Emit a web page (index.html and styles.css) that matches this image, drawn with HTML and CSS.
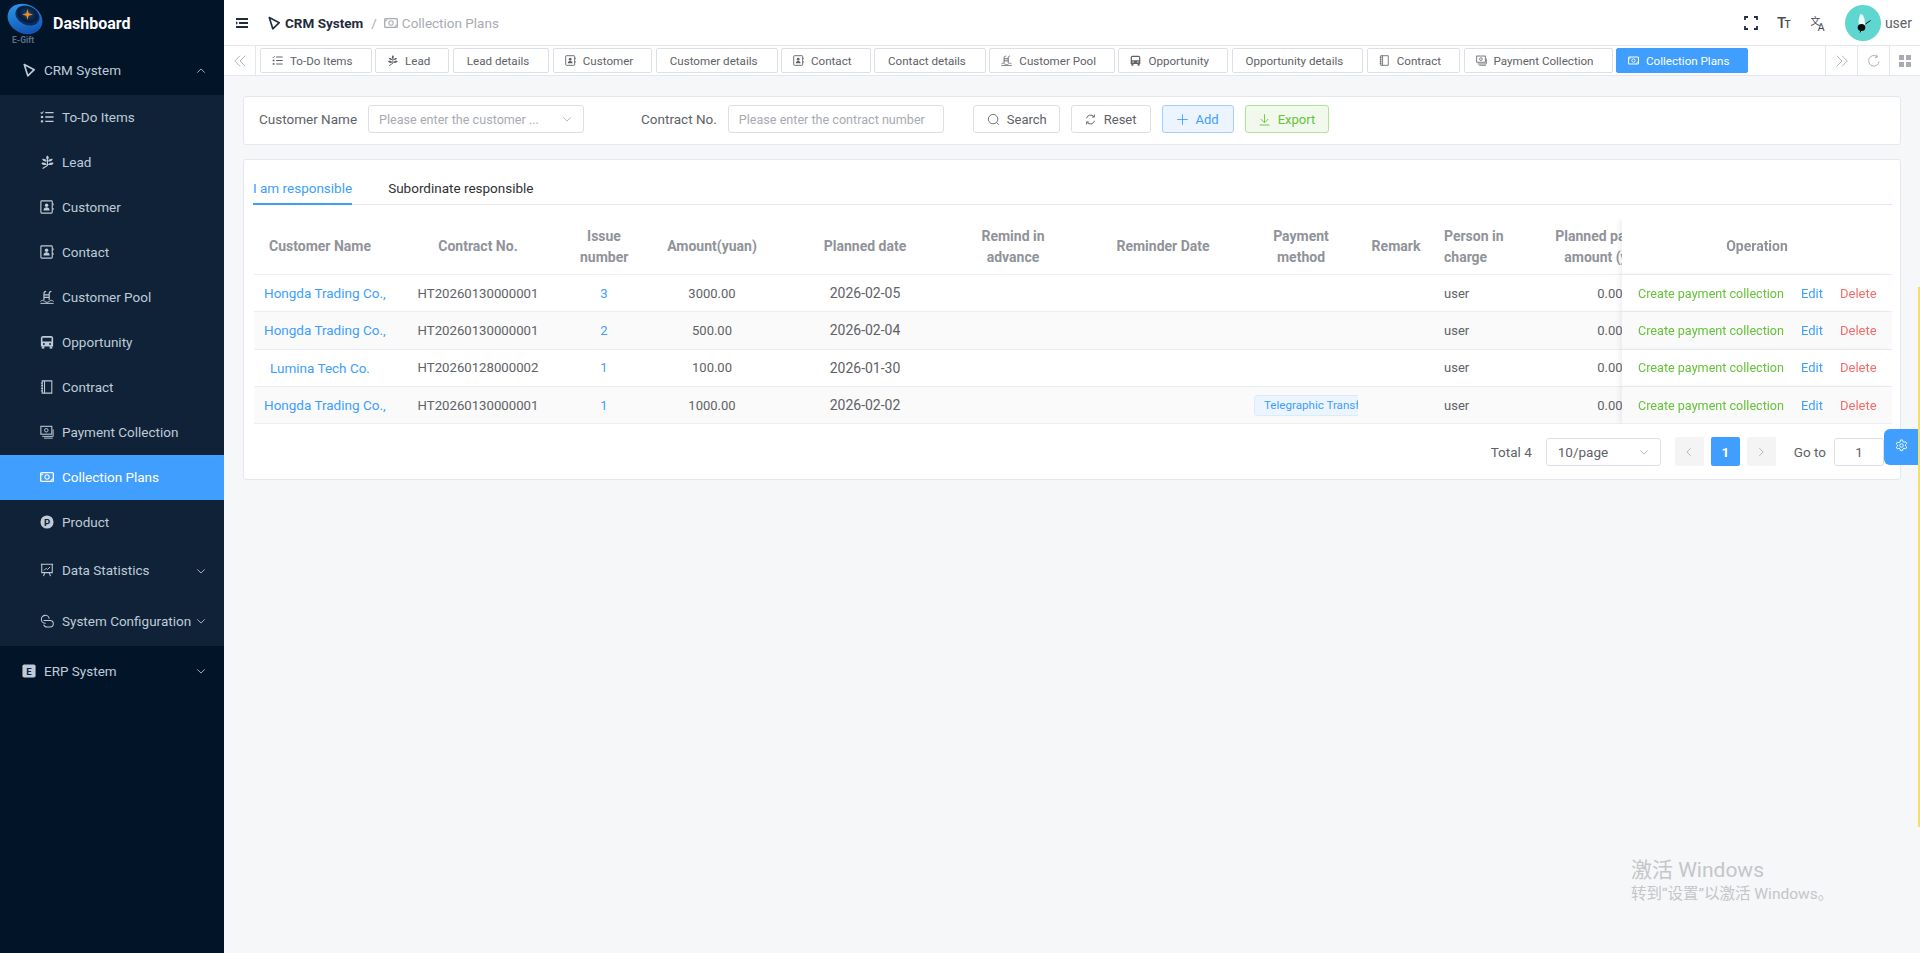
FILE: index.html
```html
<!DOCTYPE html>
<html lang="en">
<head>
    <meta charset="UTF-8">
    <meta name="viewport" content="width=device-width, initial-scale=1.0">
    <title>Collection Plans - CRM System</title>
    <link rel="stylesheet" href="styles.css">
</head>
<body>
    <svg class="icon-defs" xmlns="http://www.w3.org/2000/svg">
        <symbol id="i-brand" viewBox="0 0 16 16"><path d="M2.600 1.800 14 7.600 6.600 14.600 Z" fill="none" stroke="currentColor" stroke-width="1.900" stroke-linejoin="round"/></symbol>
        <symbol id="i-todo" viewBox="0 0 16 16"><path d="M6 3h9.500M6 8h9.500M6 13h9.500" stroke="currentColor" stroke-width="1.500" fill="none"/><path d="M.8 2.800l1.200 1.200 2-2.300" stroke="currentColor" stroke-width="1.200" fill="none"/><rect x="1" y="6.800" width="2.600" height="2.400" fill="currentColor"/><rect x="1" y="11.800" width="2.600" height="2.400" fill="currentColor"/></symbol>
        <symbol id="i-lead" viewBox="0 0 16 16"><path d="M8.500 5v7L3 15.500" fill="none" stroke="currentColor" stroke-width="1.300"/><path d="M8.500 .5C10.500 2 10.500 4 8.500 6 6.500 4 6.500 2 8.500 .5zM8 7C6.500 4.500 4.500 4 2.500 4.500 3 7 5.500 8 8 7zM9 7c1.500-2.500 3.500-3 5.500-2.500C14 7 11.500 8 9 7zM8 11C6.500 8.500 3.500 8 1.500 9 2.500 11.500 5.500 12 8 11zM9 11c1.500-2.500 4.500-3 6.500-2-1 2.500-4 3-6.500 2z" fill="currentColor"/></symbol>
        <symbol id="i-customer" viewBox="0 0 16 16"><rect x="1" y="1" width="13" height="14" rx="1" fill="none" stroke="currentColor" stroke-width="1.300"/><circle cx="7.500" cy="6" r="2" fill="currentColor"/><path d="M4 12c0-5 7-5 7 0z" fill="currentColor"/><path d="M15 4v2M15 9v2" stroke="currentColor" stroke-width="1.200"/></symbol>
        <symbol id="i-pool" viewBox="0 0 16 16"><path d="M4.500 11.500V4C4.500 2.500 5.500 1.500 7 1.500M10.500 11.500V4C10.500 2.500 11.500 1.500 13 1.500M4.500 5.500h6M4.500 8.500h6" stroke="currentColor" stroke-width="1.300" fill="none"/><path d="M.5 13c2-1.500 3-1.500 5 0s3 1.500 5 0 3-1.500 5 0M.5 15.300h15" stroke="currentColor" stroke-width="1.100" fill="none"/></symbol>
        <symbol id="i-bus" viewBox="0 0 16 16"><path fill-rule="evenodd" d="M3.500 1h9A2.500 2.500 0 0 1 15 3.500V13H1V3.500A2.500 2.500 0 0 1 3.500 1zM2.800 3v4.500h10.400V3zM4.500 9.100a1.100 1.100 0 1 0 0 2.200 1.100 1.100 0 0 0 0-2.200zM11.500 9.100a1.100 1.100 0 1 0 0 2.200 1.100 1.100 0 0 0 0-2.200z" fill="currentColor"/><rect x="2" y="13" width="3" height="2.500" fill="currentColor"/><rect x="11" y="13" width="3" height="2.500" fill="currentColor"/></symbol>
        <symbol id="i-contract" viewBox="0 0 16 16"><path d="M2.500 1h11v14h-11zM5.200 1v14" fill="none" stroke="currentColor" stroke-width="1.200"/><path d="M1 3.500h2.500M1 6.500h2.500M1 9.500h2.500M1 12.500h2.500" stroke="currentColor" stroke-width="1.100"/></symbol>
        <symbol id="i-payment" viewBox="0 0 16 16"><rect x="1" y="1.500" width="12.500" height="9" fill="none" stroke="currentColor" stroke-width="1.200"/><circle cx="7.200" cy="6" r="2" fill="none" stroke="currentColor" stroke-width="1.100"/><path d="M2.500 13h12.500v-8M4.500 15h10" fill="none" stroke="currentColor" stroke-width="1.100"/></symbol>
        <symbol id="i-money" viewBox="0 0 16 16"><rect x=".8" y="3" width="14.400" height="10" rx="1" fill="none" stroke="currentColor" stroke-width="1.500"/><circle cx="8" cy="8" r="2.500" fill="none" stroke="currentColor" stroke-width="1.200"/><path d="M.8 5.500h2l1-2.500M15.200 10.500h-2l-1 2.500" fill="none" stroke="currentColor" stroke-width="1"/></symbol>
        <symbol id="i-stats" viewBox="0 0 16 16"><path d="M1 1.500h14M2 1.500v9.500h12V1.500M5.500 11l-1.500 4M10.500 11l1.500 4" fill="none" stroke="currentColor" stroke-width="1.200"/><path d="M4.500 8.500l2.500-2.500 1.500 1.500 3-3" fill="none" stroke="currentColor" stroke-width="1.100"/></symbol>
        <symbol id="i-config" viewBox="0 0 16 16"><path d="M6.500 10.500A4.500 4.500 0 1 1 10.500 5.500" fill="none" stroke="currentColor" stroke-width="1.200"/><path d="M4 7.500h7.500a3.700 3.700 0 0 1 0 7.400H8a4 4 0 0 1-3.800-2.800" fill="none" stroke="currentColor" stroke-width="1.200"/></symbol>
        <symbol id="i-chevron" viewBox="0 0 12 12"><path d="M1.500 4 6 8.500 10.500 4" fill="none" stroke="currentColor" stroke-width="1"/></symbol>
        <symbol id="i-search" viewBox="0 0 16 16"><circle cx="7.500" cy="7.500" r="5.800" fill="none" stroke="currentColor" stroke-width="1.100"/><path d="M11.700 11.700 14.500 14.500" stroke="currentColor" stroke-width="1.100"/></symbol>
        <symbol id="i-refresh" viewBox="0 0 16 16"><path d="M3 6.500A5.300 5.300 0 0 1 12.200 4.500M13 9.500A5.300 5.300 0 0 1 3.800 11.500" fill="none" stroke="currentColor" stroke-width="1.200"/><path d="M12.800 1.800v3.200H9.700M3.200 14.200V11h3.100" fill="none" stroke="currentColor" stroke-width="1.100"/></symbol>
        <symbol id="i-reload" viewBox="0 0 16 16"><path d="M13.800 8.500A6 6 0 1 1 11.500 3" fill="none" stroke="currentColor" stroke-width="1.100"/><path d="M11 .8l.8 2.700-2.700.8" fill="none" stroke="currentColor" stroke-width="1.100"/></symbol>
        <symbol id="i-plus" viewBox="0 0 16 16"><path d="M8 1.500v13M1.500 8h13" stroke="currentColor" stroke-width="1.100"/></symbol>
        <symbol id="i-download" viewBox="0 0 16 16"><path d="M8 1.500v10M3.500 7.500 8 12l4.500-4.500M2 14.800h12" fill="none" stroke="currentColor" stroke-width="1.100"/></symbol>
        <symbol id="i-gear" viewBox="0 0 16 16"><path d="M6.700 1.200h2.600l.4 2 1.500.8 1.900-.7 1.300 2.300-1.500 1.300v1.700l1.500 1.300-1.300 2.300-1.900-.7-1.500.8-.4 2H6.700l-.4-2-1.500-.8-1.900.7-1.300-2.300 1.500-1.300V7.400L1.600 6.100l1.300-2.300 1.900.7 1.500-.8z" fill="none" stroke="currentColor" stroke-width="1.100" stroke-linejoin="round"/><circle cx="8" cy="8" r="2.200" fill="none" stroke="currentColor" stroke-width="1.100"/></symbol>
        <symbol id="i-double" viewBox="0 0 16 16"><path d="M8 2 2 8l6 6M14 2 8 8l6 6" fill="none" stroke="currentColor" stroke-width="1"/></symbol>
        <symbol id="i-full" viewBox="0 0 14 14"><path d="M1 4V1h3M10 1h3v3M13 10v3h-3M4 13H1v-3" fill="none" stroke="currentColor" stroke-width="1.800"/></symbol>
    </svg>

    <div class="layout">
        <aside class="sidebar">
            <div class="logo">
                <svg class="logo-mark" viewBox="0 0 38 41">
                    <defs>
                        <linearGradient id="logo-blue" x1="0" y1="0" x2="1" y2="1">
                            <stop offset="0" stop-color="#2f9ff0"/>
                            <stop offset="1" stop-color="#0c46a6"/>
                        </linearGradient>
                        <radialGradient id="logo-core" cx="50%" cy="45%" r="55%">
                            <stop offset="0" stop-color="#16457a"/>
                            <stop offset="1" stop-color="#04152c"/>
                        </radialGradient>
                    </defs>
                    <ellipse cx="19" cy="16" rx="18" ry="14.500" transform="rotate(25 19 16)" fill="url(#logo-blue)"/>
                    <ellipse cx="21.500" cy="12.500" rx="12.500" ry="9.500" transform="rotate(25 21.500 12.500)" fill="#0a2a5c"/>
                    <ellipse cx="21.500" cy="11.500" rx="10.500" ry="7.500" transform="rotate(25 21.500 11.500)" fill="url(#logo-core)"/>
                    <path d="M21.500 6l1.200 4.300 4.300 1.200-4.300 1.200-1.200 4.300-1.200-4.300-4.300-1.200 4.300-1.200z" fill="#f08a24"/>
                    <text class="logo-text" x="6" y="40">E-Gift</text>
                </svg>
                <span class="logo-title">Dashboard</span>
            </div>

            <div class="menu-head open">
                <svg class="menu-icon"><use href="#i-brand"/></svg>
                <span class="menu-label">CRM System</span>
                <svg class="menu-arrow up"><use href="#i-chevron"/></svg>
            </div>
            <div class="submenu">
                <a class="menu-item"><svg class="menu-icon"><use href="#i-todo"/></svg><span>To-Do Items</span></a>
                <a class="menu-item"><svg class="menu-icon"><use href="#i-lead"/></svg><span>Lead</span></a>
                <a class="menu-item"><svg class="menu-icon"><use href="#i-customer"/></svg><span>Customer</span></a>
                <a class="menu-item"><svg class="menu-icon"><use href="#i-customer"/></svg><span>Contact</span></a>
                <a class="menu-item"><svg class="menu-icon"><use href="#i-pool"/></svg><span>Customer Pool</span></a>
                <a class="menu-item"><svg class="menu-icon"><use href="#i-bus"/></svg><span>Opportunity</span></a>
                <a class="menu-item"><svg class="menu-icon"><use href="#i-contract"/></svg><span>Contract</span></a>
                <a class="menu-item"><svg class="menu-icon"><use href="#i-payment"/></svg><span>Payment Collection</span></a>
                <a class="menu-item active"><svg class="menu-icon"><use href="#i-money"/></svg><span>Collection Plans</span></a>
                <a class="menu-item">
                    <svg class="menu-icon" viewBox="0 0 16 16"><circle cx="8" cy="8" r="7.500" fill="currentColor"/><text class="icon-letter dark" x="8" y="12">P</text></svg>
                    <span>Product</span>
                </a>
                <a class="menu-item tall">
                    <svg class="menu-icon"><use href="#i-stats"/></svg><span>Data Statistics</span>
                    <svg class="menu-arrow"><use href="#i-chevron"/></svg>
                </a>
                <a class="menu-item config">
                    <svg class="menu-icon"><use href="#i-config"/></svg><span>System Configuration</span>
                    <svg class="menu-arrow"><use href="#i-chevron"/></svg>
                </a>
            </div>
            <div class="menu-head">
                <svg class="menu-icon" viewBox="0 0 16 16"><rect x=".5" y=".5" width="15" height="15" rx="2" fill="currentColor"/><text class="icon-letter dark" x="8" y="12">E</text></svg>
                <span class="menu-label">ERP System</span>
                <svg class="menu-arrow"><use href="#i-chevron"/></svg>
            </div>
        </aside>

        <div class="main">
            <header class="topbar">
                <svg class="hamburger" viewBox="0 0 12 10"><path d="M0 1h12M3 5h9M0 9h12" stroke="#1f2d3d" stroke-width="2"/><path d="M0 3.200 2 5 0 6.800z" fill="#1f2d3d"/></svg>
                <svg class="crumb-icon dark"><use href="#i-brand"/></svg>
                <span class="crumb-root">CRM System</span>
                <span class="crumb-sep">/</span>
                <svg class="crumb-icon"><use href="#i-money"/></svg>
                <span class="crumb-page">Collection Plans</span>
                <div class="topbar-right">
                    <svg class="tool-icon full-icon"><use href="#i-full"/></svg>
                    <svg class="tool-icon" viewBox="0 0 14 16"><text class="tool-big" x="0" y="13">T</text><text class="tool-small" x="7.500" y="13">T</text></svg>
                    <svg class="tool-icon" viewBox="0 0 14 16"><text class="tool-zh" x="-1" y="9.500">文</text><text class="tool-en" x="6.500" y="15.500">A</text></svg>
                    <div class="avatar">
                        <svg viewBox="0 0 36 36"><circle cx="18" cy="18" r="18" fill="#5fd6d0"/><path d="M15 9l3 1 1.500 4 .5 5-1 3-5 0-.5-6z" fill="#eafbfa"/><ellipse cx="16.500" cy="22.500" rx="3.800" ry="3.500" fill="#0b0b0b"/><path d="M20.500 19l5-3.500M15 27.500l1-2" stroke="#0b0b0b" stroke-width="1"/></svg>
                    </div>
                    <span class="user-name">user</span>
                </div>
            </header>

            <div class="tagsbar">
                <div class="tag-btn first"><svg class="btn-icon"><use href="#i-double"/></svg></div>
                <div class="tags">
                    <a class="tag has-icon"><svg class="tag-icon"><use href="#i-todo"/></svg>To-Do Items</a>
                    <a class="tag has-icon"><svg class="tag-icon"><use href="#i-lead"/></svg>Lead</a>
                    <a class="tag">Lead details</a>
                    <a class="tag has-icon"><svg class="tag-icon"><use href="#i-customer"/></svg>Customer</a>
                    <a class="tag">Customer details</a>
                    <a class="tag has-icon"><svg class="tag-icon"><use href="#i-customer"/></svg>Contact</a>
                    <a class="tag">Contact details</a>
                    <a class="tag has-icon"><svg class="tag-icon"><use href="#i-pool"/></svg>Customer Pool</a>
                    <a class="tag has-icon"><svg class="tag-icon"><use href="#i-bus"/></svg>Opportunity</a>
                    <a class="tag">Opportunity details</a>
                    <a class="tag has-icon"><svg class="tag-icon"><use href="#i-contract"/></svg>Contract</a>
                    <a class="tag has-icon"><svg class="tag-icon"><use href="#i-payment"/></svg>Payment Collection</a>
                    <a class="tag has-icon current"><svg class="tag-icon"><use href="#i-money"/></svg>Collection Plans</a>
                </div>
                <div class="tag-btn"><svg class="btn-icon flip"><use href="#i-double"/></svg></div>
                <div class="tag-btn"><svg class="btn-icon"><use href="#i-reload"/></svg></div>
                <div class="tag-btn last">
                    <svg class="btn-icon" viewBox="0 0 14 14"><path d="M1 1h5v5H1zM8 1h5v5H8zM1 8h5v5H1zM8 8h5v5H8z" fill="#a8abb2"/></svg>
                </div>
            </div>

            <div class="content">
                <section class="card filter">
                    <label class="filter-label">Customer Name</label>
                    <div class="field select-field">
                        <span class="placeholder">Please enter the customer ...</span>
                        <svg class="field-arrow"><use href="#i-chevron"/></svg>
                    </div>
                    <label class="filter-label second">Contract No.</label>
                    <div class="field input-field"><span class="placeholder">Please enter the contract number</span></div>
                    <button class="btn btn-first"><svg class="btn-svg"><use href="#i-search"/></svg>Search</button>
                    <button class="btn"><svg class="btn-svg"><use href="#i-refresh"/></svg>Reset</button>
                    <button class="btn btn-blue"><svg class="btn-svg"><use href="#i-plus"/></svg>Add</button>
                    <button class="btn btn-green"><svg class="btn-svg"><use href="#i-download"/></svg>Export</button>
                </section>

                <section class="card result">
                    <div class="tabs">
                        <a class="tab active">I am responsible</a>
                        <a class="tab">Subordinate responsible</a>
                    </div>

                    <div class="table-wrap">
                        <table class="plans">
                            <colgroup>
                                <col class="c-name"><col class="c-contract"><col class="c-issue"><col class="c-amount">
                                <col class="c-date"><col class="c-remind"><col class="c-rdate"><col class="c-method">
                                <col class="c-remark"><col class="c-person"><col class="c-planned"><col class="c-op">
                            </colgroup>
                            <thead>
                                <tr>
                                    <th><div class="cell">Customer Name</div></th>
                                    <th><div class="cell">Contract No.</div></th>
                                    <th><div class="cell wrap">Issue number</div></th>
                                    <th><div class="cell">Amount(yuan)</div></th>
                                    <th><div class="cell">Planned date</div></th>
                                    <th><div class="cell wrap">Remind in<br>advance</div></th>
                                    <th><div class="cell">Reminder Date</div></th>
                                    <th><div class="cell wrap">Payment method</div></th>
                                    <th><div class="cell">Remark</div></th>
                                    <th><div class="cell wrap left">Person in charge</div></th>
                                    <th><div class="cell wrap">Planned payment amount (yuan)</div></th>
                                    <th class="op"><div class="cell">Operation</div></th>
                                </tr>
                            </thead>
                            <tbody>
                                <tr>
                                    <td><div class="cell link name">Hongda Trading Co., Ltd.</div></td>
                                    <td><div class="cell code">HT20260130000001</div></td>
                                    <td><div class="cell link">3</div></td>
                                    <td><div class="cell">3000.00</div></td>
                                    <td><div class="cell date">2026-02-05</div></td>
                                    <td></td><td></td><td></td><td></td>
                                    <td><div class="cell left">user</div></td>
                                    <td><div class="cell">0.00</div></td>
                                    <td class="op"><div class="cell actions"><a class="act-green">Create payment collection</a><a class="act-blue">Edit</a><a class="act-red">Delete</a></div></td>
                                </tr>
                                <tr>
                                    <td><div class="cell link name">Hongda Trading Co., Ltd.</div></td>
                                    <td><div class="cell code">HT20260130000001</div></td>
                                    <td><div class="cell link">2</div></td>
                                    <td><div class="cell">500.00</div></td>
                                    <td><div class="cell date">2026-02-04</div></td>
                                    <td></td><td></td><td></td><td></td>
                                    <td><div class="cell left">user</div></td>
                                    <td><div class="cell">0.00</div></td>
                                    <td class="op"><div class="cell actions"><a class="act-green">Create payment collection</a><a class="act-blue">Edit</a><a class="act-red">Delete</a></div></td>
                                </tr>
                                <tr>
                                    <td><div class="cell link name">Lumina Tech Co.</div></td>
                                    <td><div class="cell code">HT20260128000002</div></td>
                                    <td><div class="cell link">1</div></td>
                                    <td><div class="cell">100.00</div></td>
                                    <td><div class="cell date">2026-01-30</div></td>
                                    <td></td><td></td><td></td><td></td>
                                    <td><div class="cell left">user</div></td>
                                    <td><div class="cell">0.00</div></td>
                                    <td class="op"><div class="cell actions"><a class="act-green">Create payment collection</a><a class="act-blue">Edit</a><a class="act-red">Delete</a></div></td>
                                </tr>
                                <tr>
                                    <td><div class="cell link name">Hongda Trading Co., Ltd.</div></td>
                                    <td><div class="cell code">HT20260130000001</div></td>
                                    <td><div class="cell link">1</div></td>
                                    <td><div class="cell">1000.00</div></td>
                                    <td><div class="cell date">2026-02-02</div></td>
                                    <td></td><td></td>
                                    <td><div class="cell left clip"><span class="pay-tag">Telegraphic Transfer</span></div></td>
                                    <td></td>
                                    <td><div class="cell left">user</div></td>
                                    <td><div class="cell">0.00</div></td>
                                    <td class="op"><div class="cell actions"><a class="act-green">Create payment collection</a><a class="act-blue">Edit</a><a class="act-red">Delete</a></div></td>
                                </tr>
                            </tbody>
                        </table>
                    </div>

                    <div class="pager">
                        <span class="pager-total">Total 4</span>
                        <div class="pager-size"><span>10/page</span><svg class="field-arrow"><use href="#i-chevron"/></svg></div>
                        <div class="pager-btn prev"><svg class="pager-arrow left-arrow"><use href="#i-chevron"/></svg></div>
                        <div class="pager-btn current">1</div>
                        <div class="pager-btn"><svg class="pager-arrow right-arrow"><use href="#i-chevron"/></svg></div>
                        <span class="pager-goto">Go to</span>
                        <div class="pager-input">1</div>
                    </div>
                </section>
            </div>
        </div>
    </div>

    <div class="settings-tab"><svg class="gear"><use href="#i-gear"/></svg></div>
    <div class="edge-line"></div>
    <div class="activate">
        <p class="activate-title">激活 Windows</p>
        <p class="activate-sub">转到“设置”以激活 Windows。</p>
    </div>
</body>
</html>
```

FILE: styles.css
```css
* {
    box-sizing: border-box;
}
html, body {
    height: 100%;
}
body {
    margin: 0;
    font-family: Roboto, "Noto Sans CJK SC", Arial, sans-serif;
    font-size: 13.500px;
    color: #606266;
    background-color: #f5f7f9;
    overflow: hidden;
}
p {
    margin: 0;
}
a {
    text-decoration: none;
    cursor: pointer;
}
.icon-defs {
    display: none;
}
.layout {
    display: flex;
    height: 100%;
}

/* sidebar */
.sidebar {
    width: 224px;
    flex-shrink: 0;
    background-color: #011428;
    color: #bfcbd9;
}
.logo {
    height: 47px;
    display: flex;
    align-items: center;
    padding-left: 6px;
    gap: 9px;
}
.logo-mark {
    width: 38px;
    height: 41px;
}
.logo-text {
    font-size: 8.500px;
    font-weight: 700;
    fill: #5d6f85;
}
.logo-title {
    font-size: 16px;
    font-weight: 700;
    color: #fff;
}
.menu-head {
    height: 48px;
    display: flex;
    align-items: center;
    padding: 0 0 2px 22px;
    position: relative;
}
.menu-head + .submenu + .menu-head {
    height: 50px;
    padding-bottom: 0;
}
.menu-label {
    margin-left: 8px;
}
.menu-icon {
    width: 14px;
    height: 14px;
    flex-shrink: 0;
}
.menu-arrow {
    width: 10px;
    height: 10px;
    position: absolute;
    right: 18px;
    top: 50%;
    margin-top: -5px;
}
.menu-arrow.up {
    transform: rotate(180deg);
}
.submenu {
    background-color: #0f2237;
}
.menu-item {
    height: 45px;
    display: flex;
    align-items: center;
    padding: 0 0 2px 40px;
    gap: 8px;
    color: #bfcbd9;
    position: relative;
}
.menu-item.tall {
    height: 51px;
}
.menu-item.config {
    height: 50px;
    padding-bottom: 0;
}
.menu-item.active {
    background-color: #409eff;
    color: #fff;
}
.icon-letter {
    font-size: 11px;
    font-weight: 700;
    text-anchor: middle;
}
.icon-letter.dark {
    fill: #0f2237;
}

/* top bar */
.main {
    flex: 1;
    min-width: 0;
    display: flex;
    flex-direction: column;
}
.topbar {
    height: 46px;
    flex-shrink: 0;
    background-color: #fff;
    border-bottom: 1px solid #e4e7ed;
    display: flex;
    align-items: center;
    padding-left: 12px;
}
.hamburger {
    width: 12px;
    height: 10px;
    margin-right: 19px;
}
.crumb-icon {
    width: 14px;
    height: 14px;
    color: #a8abb2;
}
.crumb-icon.dark {
    color: #1f2d3d;
}
.crumb-root {
    margin-left: 4px;
    font-weight: 700;
    color: #1f2d3d;
}
.crumb-sep {
    margin: 0 7px 0 8px;
    color: #a8abb2;
}
.crumb-page {
    margin-left: 4px;
    color: #a8abb2;
}
.topbar-right {
    margin-left: auto;
    display: flex;
    align-items: center;
    padding-right: 8px;
}
.tool-icon {
    width: 14px;
    height: 16px;
    margin-right: 20px;
    color: #1f2d3d;
}
.full-icon {
    margin-right: 19px;
}
.tool-big {
    font-size: 15px;
    font-weight: 500;
    fill: #4a4d52;
}
.tool-small {
    font-size: 10px;
    font-weight: 500;
    fill: #4a4d52;
}
.tool-zh {
    font-size: 10.500px;
    fill: #4a4d52;
}
.tool-en {
    font-size: 11px;
    fill: #4a4d52;
}
.avatar {
    width: 36px;
    height: 36px;
}
.avatar svg {
    display: block;
}
.user-name {
    margin-left: 4px;
    font-size: 14px;
}

/* visited pages bar */
.tagsbar {
    height: 30px;
    flex-shrink: 0;
    background-color: #fff;
    border-bottom: 1px solid #e4e7ed;
    display: flex;
    align-items: flex-start;
}
.tag-btn {
    width: 32px;
    height: 29px;
    flex-shrink: 0;
    display: flex;
    align-items: center;
    justify-content: center;
    border-left: 1px solid #e4e7ed;
    color: #a8abb2;
}
.tag-btn.first {
    border-left: none;
    border-right: 1px solid #e4e7ed;
}
.tag-btn.last {
    width: 31px;
}
.btn-icon {
    width: 14px;
    height: 14px;
}
.btn-icon.flip {
    transform: scaleX(-1);
}
.tags {
    flex: 1;
    min-width: 0;
    display: flex;
    gap: 3.500px;
    padding: 2px 0 0 4px;
}
.tag {
    height: 25px;
    padding: 0 19px 0 13px;
    display: flex;
    align-items: center;
    font-size: 11.600px;
    color: #606266;
    background-color: #fff;
    border: 1px solid #dcdfe6;
    border-radius: 2px;
    white-space: nowrap;
}
.tag.has-icon {
    padding: 0 18px 0 11px;
}
.tag-icon {
    width: 11px;
    height: 11px;
    margin-right: 7px;
}
.tag.current {
    background-color: #409eff;
    border-color: #409eff;
    color: #fff;
}

/* content */
.content {
    flex: 1;
    padding: 20px 19px 0;
}
.card {
    background-color: #fff;
    border: 1px solid #e4e7ed;
    border-radius: 3px;
}
.filter {
    height: 49px;
    display: flex;
    align-items: center;
    padding: 0 0 3px 15px;
    margin-bottom: 14px;
}
.filter-label {
    color: #606266;
    margin-right: 11px;
}
.filter-label.second {
    margin-left: 57px;
}
.field {
    height: 28px;
    border: 1px solid #dcdfe6;
    border-radius: 3px;
    display: flex;
    align-items: center;
    padding-left: 10px;
    position: relative;
    font-size: 12.600px;
}
.select-field {
    width: 216px;
}
.input-field {
    width: 216px;
}
.placeholder {
    color: #a8abb2;
    white-space: nowrap;
}
.field-arrow {
    width: 10px;
    height: 10px;
    position: absolute;
    right: 11px;
    top: 8px;
    color: #a8abb2;
}
.btn {
    height: 28px;
    padding: 0 13px 0 12px;
    margin-left: 11px;
    display: flex;
    align-items: center;
    gap: 7px;
    font-family: inherit;
    font-size: 13px;
    color: #606266;
    background-color: #fff;
    border: 1px solid #dcdfe6;
    border-radius: 3px;
}
.btn-first {
    margin-left: 29px;
    padding: 0 12px 0 13px;
}
.btn-svg {
    width: 13px;
    height: 13px;
}
.btn-blue {
    padding: 0 14px 0 13px;
    color: #409eff;
    background-color: #ecf5ff;
    border-color: #a0cfff;
}
.btn-green {
    color: #67c23a;
    background-color: #f0f9eb;
    border-color: #b3e19d;
}

/* result card */
.result {
    height: 321px;
    padding: 0 8px 0 9px;
}
.tabs {
    height: 45px;
    display: flex;
    gap: 36px;
    border-bottom: 1px solid #e4e7ed;
}
.tab {
    height: 45px;
    padding-top: 17px;
    line-height: 22px;
    color: #303133;
}
.tab.active {
    color: #409eff;
    border-bottom: 2px solid #409eff;
}
.table-wrap {
    margin-top: 14px;
    overflow: hidden;
}
.plans {
    width: 1706px;
    margin-left: 1px;
    table-layout: fixed;
    border-collapse: separate;
    border-spacing: 0;
    font-size: 13px;
}
.c-name { width: 132px; }
.c-contract { width: 184px; }
.c-issue { width: 68px; }
.c-amount { width: 148px; }
.c-date { width: 158px; }
.c-remind { width: 138px; }
.c-rdate { width: 162px; }
.c-method { width: 114px; }
.c-remark { width: 76px; }
.c-person { width: 96px; }
.c-planned { width: 160px; }
.c-op { width: 270px; }
.plans th {
    height: 56px;
    padding: 0;
    font-size: 14px;
    color: #909399;
    font-weight: 700;
    background-color: #fff;
    border-bottom: 1px solid #ebeef5;
    line-height: 21px;
}
.plans td {
    height: 37.300px;
    padding: 0;
    border-bottom: 1px solid #ebeef5;
    background-color: #fff;
}
.plans tbody tr:nth-child(even) td {
    background-color: #fafafa;
}
.cell {
    padding: 0 10px;
    text-align: center;
    white-space: nowrap;
    overflow: hidden;
}
.cell.wrap {
    white-space: normal;
}
.cell.left {
    text-align: left;
}
.cell.clip {
    padding-right: 0;
}
.cell.name {
    font-size: 13.500px;
}
.cell.code {
    font-size: 13.200px;
}
.cell.date {
    font-size: 14px;
}
.link {
    color: #409eff;
}
.pay-tag {
    display: inline-block;
    height: 21px;
    line-height: 19px;
    padding: 0 9px;
    font-size: 11.600px;
    color: #409eff;
    background-color: #ecf5ff;
    border: 1px solid #d9ecff;
    border-radius: 3px;
    vertical-align: middle;
}
.plans .op {
    position: sticky;
    right: 0;
    box-shadow: -3px 0 5px rgba(0, 0, 0, 0.06);
}
.actions {
    display: flex;
    gap: 17px;
    padding-left: 16px;
}
.act-green { color: #67c23a; font-size: 12.600px; }
.act-blue { color: #409eff; }
.act-red { color: #f56c6c; }

/* pagination */
.pager {
    display: flex;
    align-items: center;
    justify-content: flex-end;
    padding: 13px 8px 0 0;
}
.pager-total {
    margin-right: 14px;
}
.pager-size {
    width: 115px;
    height: 28px;
    position: relative;
    display: flex;
    align-items: center;
    padding-left: 11px;
    border: 1px solid #dcdfe6;
    border-radius: 3px;
    margin-right: 14px;
}
.pager-btn {
    width: 29px;
    height: 29px;
    display: flex;
    align-items: center;
    justify-content: center;
    margin-right: 7px;
    background-color: #f4f4f5;
    color: #a8abb2;
    border-radius: 2px;
}
.pager-btn.current {
    background-color: #409eff;
    color: #fff;
    font-weight: 700;
}
.pager-arrow {
    width: 10px;
    height: 10px;
}
.left-arrow {
    transform: rotate(90deg);
}
.right-arrow {
    transform: rotate(-90deg);
}
.pager-goto {
    margin-left: 11px;
}
.pager-input {
    width: 50px;
    height: 28px;
    line-height: 26px;
    text-align: center;
    border: 1px solid #dcdfe6;
    border-radius: 3px;
    margin-left: 8px;
}

/* things lying over the page */
.settings-tab {
    position: absolute;
    left: 1884px;
    top: 429px;
    width: 34px;
    height: 36px;
    background-color: #409eff;
    border-radius: 6px 0 0 6px;
    color: #fff;
    display: flex;
    align-items: center;
    justify-content: center;
}
.gear {
    width: 13px;
    height: 13px;
    margin-top: -3px;
}
.edge-line {
    position: absolute;
    left: 1918px;
    top: 287px;
    width: 2px;
    height: 540px;
    background-color: #f7e15a;
}
.activate {
    position: absolute;
    left: 1631px;
    top: 856px;
    color: #c4c6c9;
}
.activate-title {
    font-size: 21px;
    line-height: 28px;
}
.activate-sub {
    font-size: 15.500px;
    line-height: 21px;
}
```
